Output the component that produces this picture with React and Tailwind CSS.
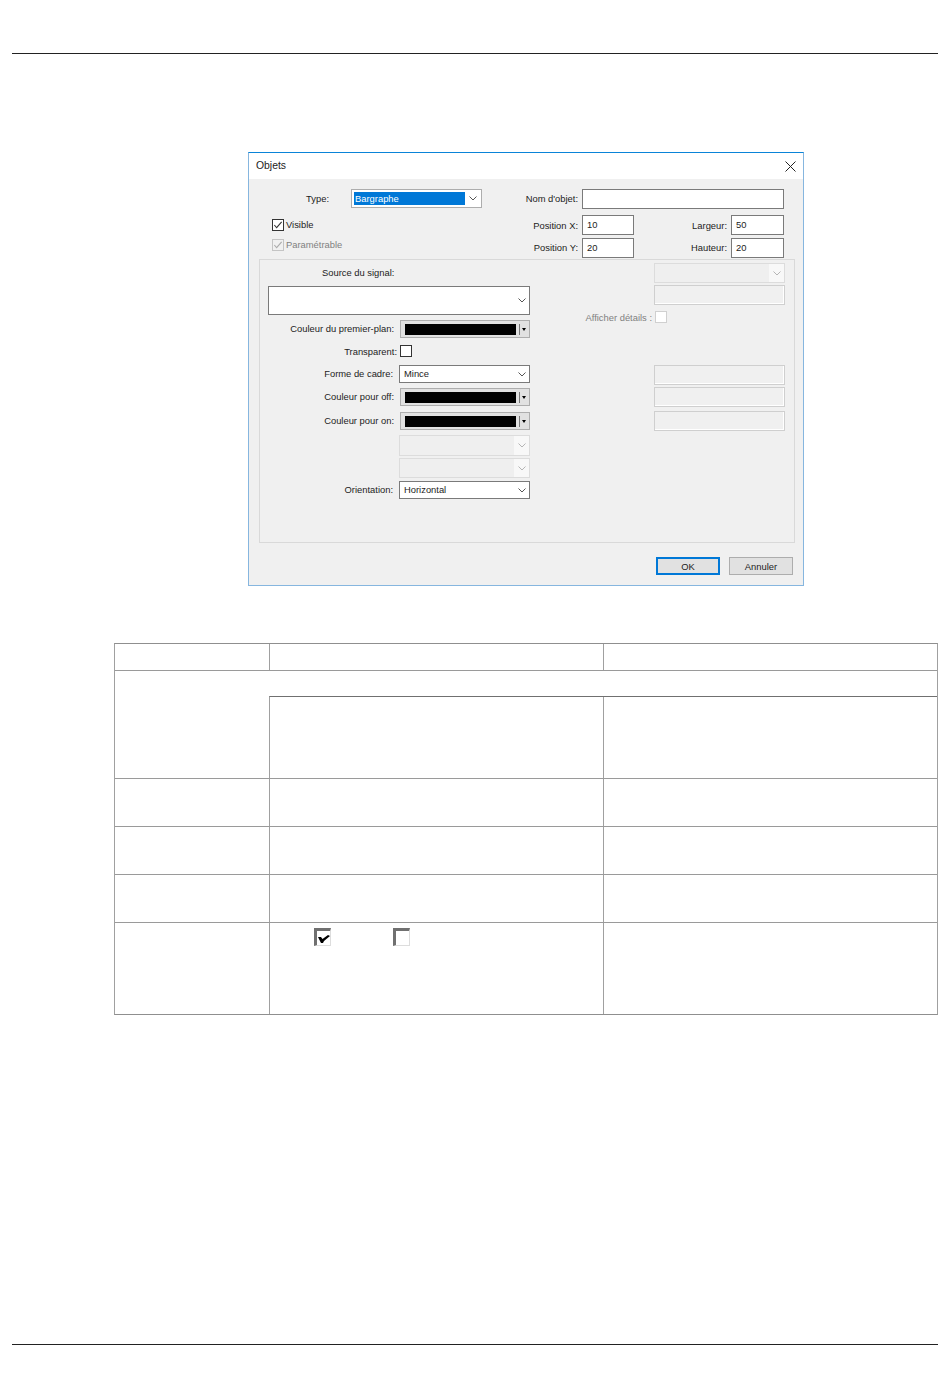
const Chevron = ({ color = "#555" }) => (
  <svg width="8" height="5" viewBox="0 0 8 5" fill="none" stroke={color} strokeWidth="1">
    <path d="M0.5 0.5 L4 4 L7.5 0.5" />
  </svg>
);

const Check = ({ color = "#333" }) => (
  <svg width="11" height="10" viewBox="0 0 11 10" fill="none" stroke={color} strokeWidth="1.2">
    <path d="M1.5 5 L4 8 L9.5 1.5" />
  </svg>
);

const Label = ({ children, className = "" }) => (
  <span className={`whitespace-nowrap text-[9.4px] leading-none text-[#1c1c1c] ${className}`}>{children}</span>
);

const Select = ({ value, className = "" }) => (
  <div className={`flex w-[131px] items-center justify-between border border-[#7a7a7a] bg-white pl-[4px] pr-[3px] ${className}`}>
    <Label>{value}</Label>
    <Chevron />
  </div>
);

const DisabledSelect = ({ className = "" }) => (
  <div className={`flex w-[131px] items-stretch border border-[#dcdcdc] bg-[#efefef] ${className}`}>
    <div className="flex-1" />
    <div className="flex w-[15px] items-center justify-center bg-[#f8f8f8]">
      <Chevron color="#b5b5b5" />
    </div>
  </div>
);

const DisabledInput = ({ className = "" }) => (
  <div className={`h-[20px] w-[131px] border border-[#cfcfcf] bg-[#f0f0f0] shadow-[inset_-1px_-1px_0_#ffffff] ${className}`} />
);

const Input = ({ value, className = "" }) => (
  <div className={`flex h-[20px] items-center border border-[#7a7a7a] bg-white pl-[4px] ${className}`}>
    <Label>{value}</Label>
  </div>
);

const ColorPicker = () => (
  <div className="flex h-[18px] w-[130px] items-center border border-[#adadad] bg-[#e1e1e1] pl-[4px]">
    <div className="h-[11px] w-[111px] bg-black" />
    <div className="ml-[3px] h-[11px] w-px bg-[#777]" />
    <div className="ml-[2px] h-0 w-0 border-x-[2.5px] border-t-[3px] border-x-transparent border-t-black" />
  </div>
);

const Field = ({ label, children, className = "" }) => (
  <div className={`flex items-center justify-end gap-[6px] ${className}`}>
    <Label>{label}</Label>
    {children}
  </div>
);

const Dialog = () => (
  <div className="ml-[248px] mt-[98px] flex h-[434px] w-[556px] flex-col border border-[#86b6df] border-t-[#0a84d8] bg-[#f0f0f0]">
    <div className="flex h-[26px] shrink-0 items-center justify-between bg-white pl-[7px] pr-[7px]">
      <span className="text-[10.4px] leading-none text-[#1c1c1c]">Objets</span>
      <svg width="11" height="11" viewBox="0 0 11 11" stroke="#222" strokeWidth="1">
        <path d="M0.5 0.5 L10.5 10.5 M10.5 0.5 L0.5 10.5" />
      </svg>
    </div>

    <div className="flex h-[80px] shrink-0">
      <div className="w-[251px] pt-[10px]">
        <div className="flex items-center">
          <Label className="w-[80px] text-right">Type:</Label>
          <div className="ml-[22px] flex h-[19px] w-[131px] items-center border border-[#adadad] bg-white pl-[2px] pr-[4px]">
            <span className="flex h-[13px] w-[111px] items-center bg-[#0078d7] pl-px text-[9.4px] leading-none text-white">
              Bargraphe
            </span>
            <div className="ml-auto">
              <Chevron />
            </div>
          </div>
        </div>
        <div className="mt-[11px] flex items-center pl-[23px]">
          <div className="flex h-[12px] w-[12px] items-center justify-center border border-[#333] bg-white">
            <Check />
          </div>
          <Label className="ml-[2px]">Visible</Label>
        </div>
        <div className="mt-[8px] flex items-center pl-[23px]">
          <div className="flex h-[12px] w-[12px] items-center justify-center border border-[#c4c4c4]">
            <Check color="#aaa" />
          </div>
          <Label className="ml-[2px] text-[#808080]">Paramétrable</Label>
        </div>
      </div>

      <div className="w-[284px] pt-[10px]">
        <div className="flex items-center">
          <Label className="w-[78px] text-right">Nom d'objet:</Label>
          <Input value="" className="ml-[4px] w-[202px]" />
        </div>
        <div className="mt-[6px] flex items-center">
          <Label className="w-[78px] pt-px text-right">Position X:</Label>
          <Input value="10" className="ml-[4px] w-[52px]" />
          <Label className="w-[93px] pt-px text-right">Largeur:</Label>
          <Input value="50" className="ml-[4px] w-[53px]" />
        </div>
        <div className="mt-[3px] flex items-center">
          <Label className="w-[78px] pb-px text-right">Position Y:</Label>
          <Input value="20" className="ml-[4px] w-[52px]" />
          <Label className="w-[93px] pb-px text-right">Hauteur:</Label>
          <Input value="20" className="ml-[4px] w-[53px]" />
        </div>
      </div>
    </div>

    <div className="ml-[10px] flex h-[284px] w-[536px] shrink-0 border border-[#d9d9d9]">
      <div className="w-[270px] shrink-0 pl-[8px]">
        <div className="flex h-[26px] items-center pl-[54px]">
          <Label>Source du signal:</Label>
        </div>
        <Select value="" className="h-[29px] w-[262px]" />
        <Field label="Couleur du premier-plan:" className="mt-[5px]">
          <ColorPicker />
        </Field>
        <div className="mt-[7px] flex items-center">
          <Label className="w-[129px] pt-px text-right">Transparent:</Label>
          <div className="ml-[3px] h-[12px] w-[12px] border border-[#333] bg-white" />
        </div>
        <Field label="Forme de cadre:" className="mt-[8px]">
          <Select value="Mince" className="h-[18px]" />
        </Field>
        <Field label="Couleur pour off:" className="mt-[5px]">
          <ColorPicker />
        </Field>
        <Field label="Couleur pour on:" className="mt-[6px]">
          <ColorPicker />
        </Field>
        <div className="mt-[5px] flex justify-end">
          <DisabledSelect className="h-[21px]" />
        </div>
        <div className="mt-[2px] flex justify-end">
          <DisabledSelect className="h-[20px]" />
        </div>
        <Field label="Orientation:" className="mt-[3px]">
          <Select value="Horizontal" className="h-[18px]" />
        </Field>
      </div>

      <div className="ml-[124px] flex w-[131px] shrink-0 flex-col pt-[3px]">
        <DisabledSelect className="h-[20px]" />
        <DisabledInput className="mt-[2px]" />
        <div className="-ml-[71px] mt-[6px] flex items-center">
          <Label className="w-[69px] pt-px text-right text-[#808080]">Afficher détails :</Label>
          <div className="ml-[3px] h-[12px] w-[12px] border border-[#d0d0d0] bg-white" />
        </div>
        <DisabledInput className="mt-[42px]" />
        <DisabledInput className="mt-[2px]" />
        <DisabledInput className="mt-[4px]" />
      </div>
    </div>

    <div className="flex justify-end pr-[10px] pt-[14px]">
      <button className="flex h-[18px] w-[64px] items-center justify-center border-2 border-[#0078d7] bg-[#e1e1e1] pt-px text-[9.4px] leading-none text-[#1c1c1c]">
        OK
      </button>
      <button className="ml-[9px] flex h-[18px] w-[64px] items-center justify-center border border-[#adadad] bg-[#e1e1e1] pt-px text-[9.4px] leading-none text-[#1c1c1c]">
        Annuler
      </button>
    </div>
  </div>
);

const TableCheck = ({ checked }) => (
  <div className="flex h-[18px] w-[17px] items-center justify-center border-[3px] border-r border-b border-[#707070] border-r-[#dddddd] border-b-[#dddddd] bg-white">
    {checked && (
      <svg width="12" height="9" viewBox="0 0 12 9">
        <path d="M0 3 L3 3 L4.5 5 L10 1 L12 2 L6 7 L5 9 L3 9 Z" fill="#000" />
      </svg>
    )}
  </div>
);

const rows = [48, 48, 48];

const SpecTable = () => (
  <div className="ml-[114px] mt-[57px] w-[824px] border border-[#a0a0a0] border-b-[#8f8f8f] border-t-[#8f8f8f]">
    <div className="grid h-[27px] grid-cols-[155px_334px_1fr] border-b border-[#9a9a9a]">
      <div className="border-r border-[#a0a0a0]" />
      <div className="border-r border-[#a0a0a0]" />
      <div />
    </div>
    <div className="grid h-[108px] grid-cols-[155px_1fr] border-b border-[#9a9a9a]">
      <div />
      <div className="flex flex-col">
        <div className="h-[25px]" />
        <div className="-ml-px grid flex-1 grid-cols-[334px_1fr] border-l border-t border-[#707070] border-l-[#a0a0a0]">
          <div className="border-r border-[#a0a0a0]" />
          <div />
        </div>
      </div>
    </div>
    {rows.map((height, i) => (
      <div key={i} className="grid h-[48px] grid-cols-[155px_334px_1fr] border-b border-[#9a9a9a]">
        <div className="border-r border-[#a0a0a0]" />
        <div className="border-r border-[#a0a0a0]" />
        <div />
      </div>
    ))}
    <div className="grid h-[91px] grid-cols-[155px_334px_1fr]">
      <div className="border-r border-[#a0a0a0]" />
      <div className="flex gap-[62px] border-r border-[#a0a0a0] pl-[44px] pt-[5px]">
        <TableCheck checked />
        <TableCheck />
      </div>
      <div />
    </div>
  </div>
);

export default function App() {
  return (
    <div className="flex h-[1398px] w-[950px] flex-col bg-white font-['Liberation_Sans',Arial,sans-serif]">
      <div className="mx-[12px] mt-[53px] h-px shrink-0 bg-[#222]" />
      <Dialog />
      <SpecTable />
      <div className="mx-[12px] mb-[53px] mt-auto h-px shrink-0 bg-[#222]" />
    </div>
  );
}
